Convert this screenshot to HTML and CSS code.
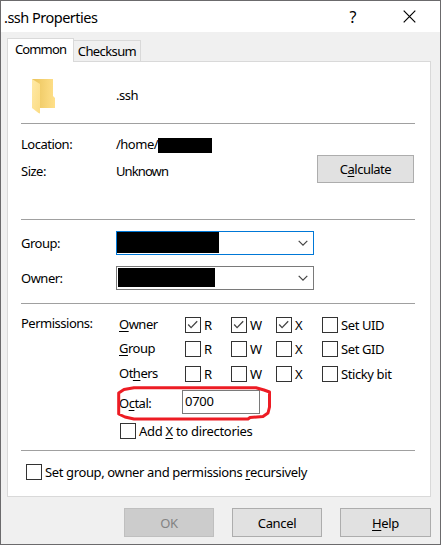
FILE: index.html
```html
<!DOCTYPE html>
<html lang="en">
<head>
<meta charset="utf-8">
<title>.ssh Properties</title>
<link rel="stylesheet" href="styles.css">
</head>
<body>
<div class="window">
  <header class="titlebar">
    <h1 class="title">.ssh Properties</h1>
    <span class="help-mark">?</span>
    <svg class="close" width="13" height="13" viewBox="0 0 13 13"><path d="M.7.7l11.6 11.6M12.3.7L.7 12.3"/></svg>
  </header>
  <nav class="tabs">
    <span class="tab active">Common</span>
    <span class="tab checksum">Checksum</span>
  </nav>
  <main class="panel">
    <section class="identity">
      <svg class="folder" width="26" height="36" viewBox="0 0 26 36">
        <defs>
          <linearGradient id="back" x1="0" x2="1"><stop offset="0" stop-color="#eac35a"/><stop offset="1" stop-color="#ffe08a"/></linearGradient>
          <linearGradient id="front" x1="0" x2="1" y2="1"><stop offset="0" stop-color="#ffe9a6"/><stop offset="1" stop-color="#fbdc84"/></linearGradient>
        </defs>
        <path d="M0 1h21v17l2 2v10H7z" fill="url(#back)"/>
        <path d="M0 1l8 5v29.500L6.500 35 0 30z" fill="url(#front)"/>
      </svg>
      <span class="filename">.ssh</span>
    </section>
    <section class="info">
      <div class="facts">
        <span class="location">Location:</span><span class="path">/home/<i class="redacted"></i></span>
        <span>Size:</span><span class="unknown">Unknown</span>
      </div>
      <button class="button calculate"><span>C<u>a</u>lculate</span></button>
    </section>
    <section class="ownership">
      <label>Group:</label>
      <div class="combo focused"><i class="mask"></i><svg width="10" height="6" viewBox="0 0 10 6"><path d="M.7.8L5 5.100 9.300.8"/></svg></div>
      <label>Owner:</label>
      <div class="combo second"><i class="mask"></i><svg width="10" height="6" viewBox="0 0 10 6"><path d="M.7.8L5 5.100 9.300.8"/></svg></div>
    </section>
    <section class="permissions">
      <span class="heading">Permissions:</span>
      <div class="rights">
        <div class="right-row">
          <span class="who"><u>O</u>wner</span>
          <label class="check"><svg class="box on" viewBox="0 0 16 16"><path d="M2.500 7.500l3.300 3.500 7-7.300"/></svg>R</label>
          <label class="check"><svg class="box on" viewBox="0 0 16 16"><path d="M2.500 7.500l3.300 3.500 7-7.300"/></svg>W</label>
          <label class="check"><svg class="box on" viewBox="0 0 16 16"><path d="M2.500 7.500l3.300 3.500 7-7.300"/></svg>X</label>
          <label class="check"><i class="box"></i>Set UID</label>
        </div>
        <div class="right-row group-row">
          <span class="who"><u>G</u>roup</span>
          <label class="check"><i class="box"></i>R</label>
          <label class="check"><i class="box"></i>W</label>
          <label class="check"><i class="box"></i>X</label>
          <label class="check"><i class="box"></i>Set GID</label>
        </div>
        <div class="right-row others-row">
          <span class="who">Ot<u>h</u>ers</span>
          <label class="check"><i class="box"></i>R</label>
          <label class="check"><i class="box"></i>W</label>
          <label class="check"><i class="box"></i>X</label>
          <label class="check"><i class="box"></i>Sticky bit</label>
        </div>
        <div class="octal">
          <span>O<u>c</u>tal:</span><span class="field">0700</span>
          <svg class="marker" width="157" height="38" viewBox="0 0 157 38"><path d="M18 2.700H140L148 5 153.500 7V22L152 28 147 31.500 134 32.500 132 34H18L9 32 2.700 29V8L8 4.500z"/></svg>
        </div>
        <label class="check directories"><i class="box"></i><span>Add <u>X</u> to directories</span></label>
      </div>
    </section>
    <section class="recursive">
      <label class="check"><i class="box"></i><span>Set group, owner and permissions <u>r</u>ecursively</span></label>
    </section>
  </main>
  <footer class="actions">
    <button class="button" disabled>OK</button>
    <button class="button cancel">Cancel</button>
    <button class="button help"><span><u>H</u>elp</span></button>
  </footer>
</div>
</body>
</html>
```
FILE: styles.css
```css
* { box-sizing: border-box; }
body { margin: 0; overflow: hidden; }
.window {
  width: 441px; height: 545px;
  display: flex; flex-direction: column;
  border: 1px solid #6b6a6c;
  background: #f0f0f0; color: #000;
  font: 13px/18px "Noto Sans", sans-serif;
  letter-spacing: -.5px;
}
u { text-decoration-thickness: 1px; text-underline-offset: 2px; text-decoration-skip-ink: none; }
svg { flex: none; fill: none; }
.titlebar { height: 31px; display: flex; align-items: center; background: #fff; padding: 0 24px 0 3px; }
.title { margin: 0; flex: 1; font-size: 14.5px; font-weight: 400; letter-spacing: -.5px; }
.help-mark { font-size: 16px; margin-right: 47px; }
.close path { stroke: #000; stroke-width: 1.200; }
.tabs { height: 29px; display: flex; align-items: flex-end; padding-left: 6px; }
.tab { border: 1px solid #d9d9d9; border-bottom: 0; text-align: center; }
.tab.active { width: 67px; height: 24px; padding-top: 1px; margin-bottom: -1px; background: #fff; position: relative; letter-spacing: -.85px; }
.checksum { width: 67px; height: 21px; padding-top: 1px; border-left: 0; letter-spacing: -.6px; }
.panel { width: 424px; height: 436px; margin-left: 6px; padding: 0 15px 0 13px; border: 1px solid #d9d9d9; background: #fff; }
.panel > section { border-bottom: 1px solid #a0a0a0; }
.identity { height: 62px; display: flex; align-items: flex-start; padding: 16px 0 0 11px; }
.filename { margin: 8px 0 0 58px; }
.info { height: 96px; display: flex; justify-content: space-between; padding: 11px 1px 0 0; }
.facts { display: grid; grid-template-columns: 95px auto; grid-auto-rows: 27px; }
.path { display: flex; }
.unknown { letter-spacing: -.9px; }
.redacted { width: 54px; height: 15px; margin-top: 3px; background: #000; }
.button { display: flex; align-items: center; justify-content: center; padding: 0; border: 1px solid #adadad; background: #e1e1e1; color: #000; font: inherit; letter-spacing: inherit; }
.calculate { width: 97px; height: 28px; margin-top: 20px; }
.ownership { height: 84px; display: grid; grid-template-columns: 95px 198px; grid-template-rows: 24px 24px; row-gap: 11px; align-items: center; padding-top: 11px; }
.combo { height: 24px; display: flex; align-items: center; justify-content: space-between; padding-right: 5px; border: 1px solid #7a7a7a; }
.combo path { stroke: #444; stroke-width: 1.200; }
.focused { border-color: #0078d7; }
.mask { width: 102px; height: 21px; background: #000; align-self: flex-start; }
.second .mask { width: 97px; height: 19px; margin: 1px 0 0 1px; }
.permissions { height: 147px; display: flex; padding-top: 10px; }
.heading { width: 98px; }
.rights { padding-top: 3px; }
.right-row { height: 16px; line-height: 16px; display: grid; grid-template: 16px / 66px 46px 45px 46px auto; }
.who { line-height: 15px; }
.group-row { margin-top: 8px; }
.others-row { margin-top: 9px; }
.check { display: flex; align-items: center; gap: 3px; white-space: nowrap; letter-spacing: -.4px; }
.box { width: 16px; height: 16px; flex: none; border: 1px solid #333; background: #fff; }
.on path { stroke: #444; stroke-width: 1.500; }
.octal { position: relative; height: 24px; margin-top: 8px; display: flex; }
.octal > span:first-child { width: 63px; padding-top: 4px; }
.field { width: 78px; height: 24px; border: 1px solid #7a7a7a; padding: 1px 2px; letter-spacing: -.3px; }
.marker { position: absolute; left: -3px; top: -5px; }
.marker path { stroke: #ed1c24; stroke-width: 3; stroke-linejoin: round; }
.directories { height: 16px; margin: 9px 0 0 1px; letter-spacing: -.3px; }
.panel > .recursive { border: 0; padding: 12px 0 0 5px; }
.recursive .check { letter-spacing: -.37px; }
.actions { display: flex; justify-content: flex-end; gap: 18px; padding: 11px 9px 0 0; }
.actions .button { width: 90px; height: 29px; letter-spacing: -.35px; }
.actions .help { width: 91px; }
.actions .button:disabled { border-color: #bfbfbf; background: #ccc; color: #838383; }
```
